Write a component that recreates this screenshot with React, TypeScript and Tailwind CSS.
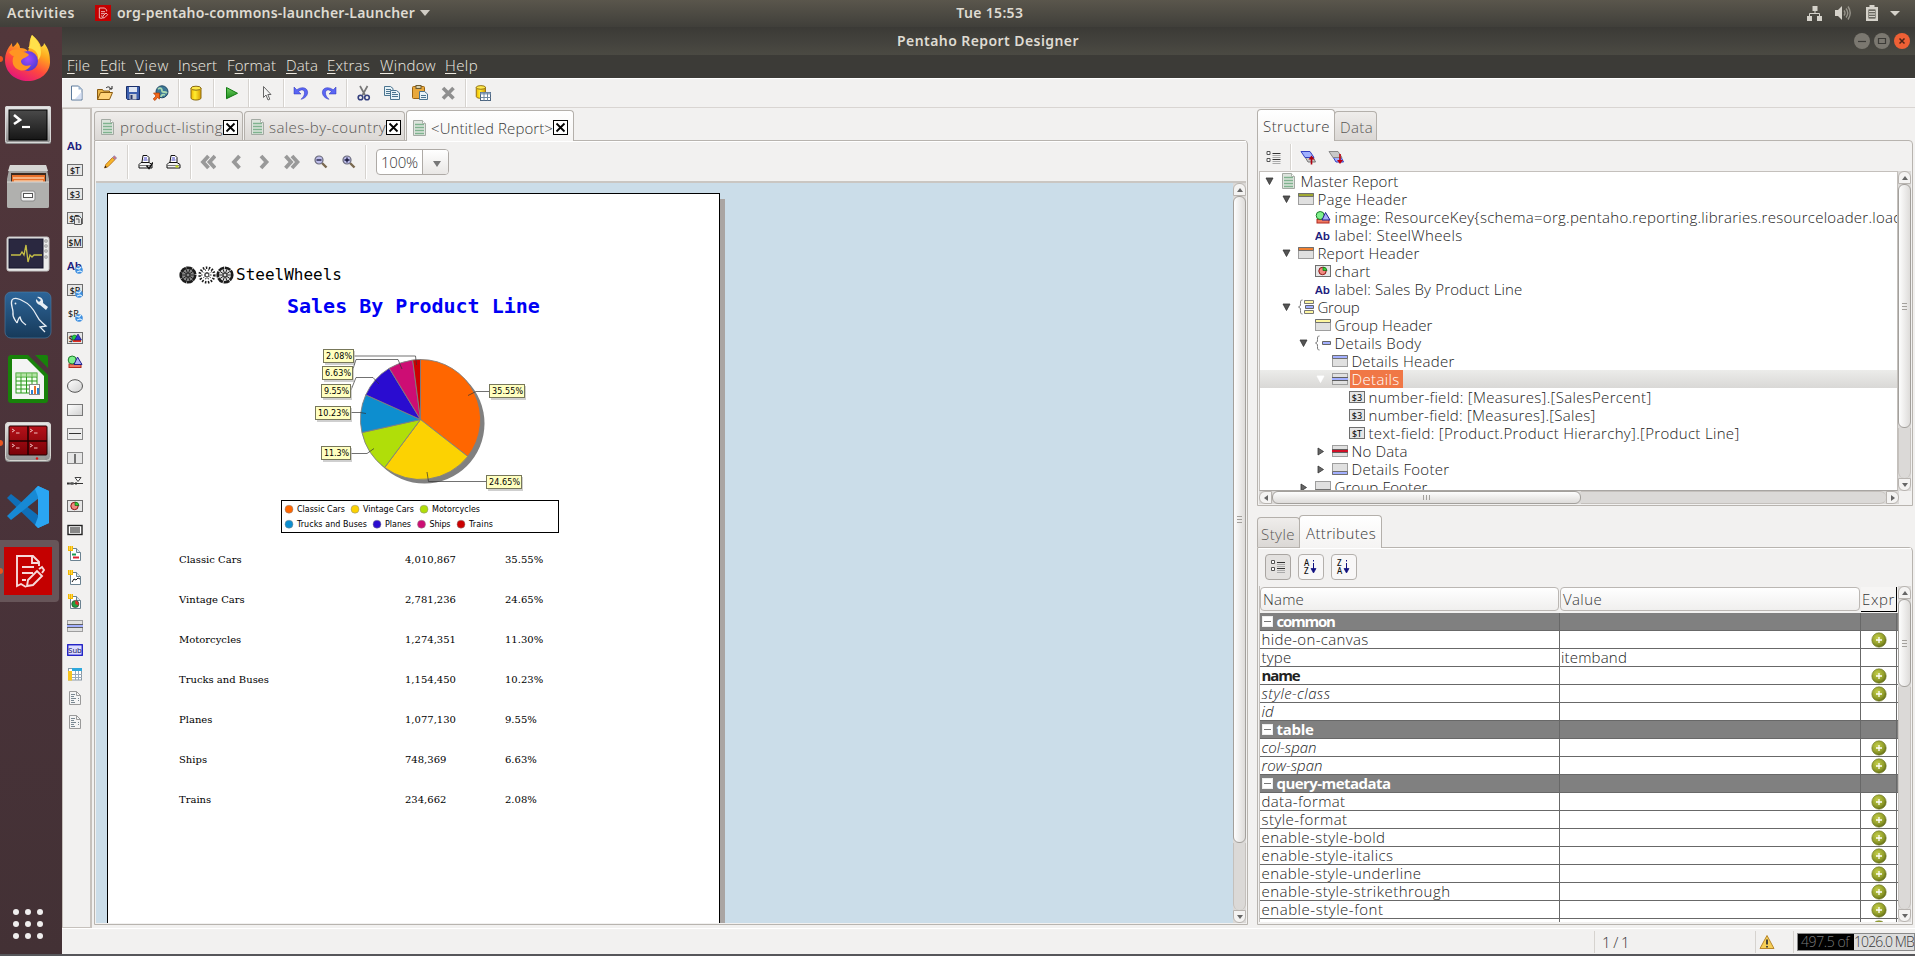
import React, { useLayoutEffect, useRef } from "react";

/* Text run whose letter spacing is tuned so that it fills `w` pixels. */
function Fit({ w, children, className = "" }: { w: number; children: React.ReactNode; className?: string }) {
  const ref = useRef<HTMLSpanElement>(null);
  useLayoutEffect(() => {
    const el = ref.current;
    if (!el) return;
    el.style.letterSpacing = "0px";
    const n = (el.textContent || "").length;
    const natural = el.getBoundingClientRect().width;
    el.style.letterSpacing = `${(w - natural) / n}px`;
  }, [w]);
  return (
    <span ref={ref} className={`inline-block whitespace-pre ${className}`}>
      {children}
    </span>
  );
}

function Ic({ children, s = 16, className = "" }: { children: React.ReactNode; s?: number; className?: string }) {
  return (
    <svg width={s} height={s} viewBox={`0 0 ${s} ${s}`} className={`shrink-0 font-normal ${className}`}>
      {children}
    </svg>
  );
}

const SMALL = "'Noto Sans', 'Open Sans', sans-serif";

function Defs() {
  return (
    <svg width="0" height="0" className="absolute">
      <defs>
        <linearGradient id="ffo" x1="0.8" y1="0" x2="0.3" y2="1">
          <stop offset="0" stopColor="#fff44f" />
          <stop offset="0.35" stopColor="#ffa81e" />
          <stop offset="0.65" stopColor="#ff4a3d" />
          <stop offset="1" stopColor="#e3137d" />
        </linearGradient>
        <radialGradient id="ffp" cx="0.5" cy="0.4" r="0.6">
          <stop offset="0" stopColor="#a04bff" />
          <stop offset="1" stopColor="#4a3bd0" />
        </radialGradient>
        <linearGradient id="yel" x1="0" x2="1">
          <stop offset="0" stopColor="#f0b400" />
          <stop offset="0.4" stopColor="#ffee30" />
          <stop offset="1" stopColor="#d89a00" />
        </linearGradient>
        <linearGradient id="grn" x1="0" y1="0" x2="0" y2="1">
          <stop offset="0" stopColor="#6fd05f" />
          <stop offset="1" stopColor="#1c8a1c" />
        </linearGradient>
        <linearGradient id="sil" x1="0" y1="0" x2="0" y2="1">
          <stop offset="0" stopColor="#e8e8e8" />
          <stop offset="1" stopColor="#8c8c8c" />
        </linearGradient>
        <linearGradient id="blk" x1="0" y1="0" x2="0" y2="1">
          <stop offset="0" stopColor="#4a4a4a" />
          <stop offset="1" stopColor="#161616" />
        </linearGradient>
        <linearGradient id="mys" x1="0" y1="0" x2="0" y2="1">
          <stop offset="0" stopColor="#2d6599" />
          <stop offset="1" stopColor="#173a5a" />
        </linearGradient>
        <linearGradient id="red" x1="0" y1="0" x2="0" y2="1">
          <stop offset="0" stopColor="#b5121a" />
          <stop offset="1" stopColor="#7a0006" />
        </linearGradient>
        <radialGradient id="olv" cx="0.4" cy="0.35" r="0.7">
          <stop offset="0" stopColor="#c5cf4a" />
          <stop offset="0.6" stopColor="#94a02c" />
          <stop offset="1" stopColor="#5f6a14" />
        </radialGradient>
        <linearGradient id="box" x1="0" y1="0" x2="1" y2="1">
          <stop offset="0" stopColor="#fff" />
          <stop offset="1" stopColor="#d0d0d0" />
        </linearGradient>
      </defs>
    </svg>
  );
}

/* ---------- Dock ---------- */
const dock: { run?: boolean; active?: boolean; g: React.ReactNode }[] = [
  {
    run: true,
    g: (
      <g transform="translate(-1 0)">
        <path d="M29 0c5 4 8 8 9 12 2-1 3-2 3-4 5 6 6 12 6 19C47 38 37 46 25 46S2 38 2 25c0-6 2-10 4-13l3-4c0 2 0 3 1 4 2-2 4-3 4-5 2 2 3 4 3 6 4 0 6 1 8 3 2-3 0-8 4-16z" fill="url(#ffo)" />
        <circle cx="25" cy="26" r="10" fill="url(#ffp)" />
        <path d="M6 17c5-4 11-3 14 0 3 0 5 2 6 3-3 3-7 3-8 6 0 4 5 6 10 4-4 8-15 7-18-1-1-4 0-7 1-8-2 0-4-2-5-4z" fill="#ff9522" />
        <path d="M29 0c5 5 9 11 9 17 0 3-1 6-3 8 1-8-5-12-10-12 4-3 1-8 4-13z" fill="#ffe14a" />
      </g>
    ),
  },
  {
    g: (
      <g>
        <rect x="1" y="7" width="46" height="38" rx="2" fill="url(#sil)" />
        <rect x="1.500" y="7.500" width="45" height="36" rx="2" fill="none" stroke="#d8d8d8" />
        <rect x="5" y="11" width="38" height="30" fill="url(#blk)" stroke="#000" />
        <path d="M10 16l6 5-6 4" fill="none" stroke="#fff" strokeWidth="2.600" />
        <path d="M18 28h8" stroke="#fff" strokeWidth="2.200" />
      </g>
    ),
  },
  {
    g: (
      <g>
        <path d="M6 2h36l3 14v27a2 2 0 0 1-2 2H5a2 2 0 0 1-2-2V16z" fill="#a3a3a1" />
        <path d="M6 2h36l2 6H4z" fill="#d5d5d3" />
        <rect x="7" y="10" width="35" height="10" fill="#3d2a20" />
        <rect x="8" y="12" width="33" height="8" fill="#e8702a" />
        <path d="M9 15h31M10 18h29" stroke="#f9c8a0" strokeWidth="1.500" />
        <path d="M3 19h42v24a2 2 0 0 1-2 2H5a2 2 0 0 1-2-2z" fill="#b0b0ae" />
        <path d="M3 19h42" stroke="#d8d8d6" />
        <rect x="17" y="28" width="14" height="10" rx="2" fill="#efefef" stroke="#888" />
        <rect x="19.500" y="30.500" width="9" height="4" fill="#fff" stroke="#555" />
      </g>
    ),
  },
  {
    g: (
      <g>
        <rect x="3" y="10" width="42" height="34" rx="2" fill="#ececec" stroke="#c4c4c4" />
        <rect x="5" y="12" width="34" height="29" fill="#2a2840" stroke="#15142a" />
        <path d="M7 28h9l2-3 2 3 0 0 2-10 2 17 2-7 2 2 2-2h8" fill="none" stroke="#c6bf45" strokeWidth="1.300" />
        {[14, 19, 24, 30].map((y) => (
          <circle key={y} cx="42" cy={y} r="1.600" fill="#bbb" stroke="#999" strokeWidth="0.500" />
        ))}
      </g>
    ),
  },
  {
    g: (
      <g>
        <rect x="1" y="1" width="46" height="46" rx="6" fill="url(#mys)" stroke="#4f7fa8" strokeWidth="0.600" />
        <path d="M13 32c-2-4-5-5-4-11 0-4-3-8-1-12 2-3 8-1 11 1 7 3 11 9 14 15 2 5 5 6 9 10l-6 1 5 5" fill="none" stroke="#e8eef4" strokeWidth="1.300" />
        <path d="M13 32c1-3 2-6 3-6 1 4 2 5 6 8" fill="none" stroke="#e8eef4" strokeWidth="1.300" />
        <circle cx="11.500" cy="12.500" r="0.900" fill="#e8eef4" />
        <path d="M33 6a5 5 0 0 1 6 6l5 4-2 3-6-5a5 5 0 0 1-4-6l3 3 2-2z" fill="#e8eef4" />
      </g>
    ),
  },
  {
    g: (
      <g>
        <path d="M6 0h18l20 20v25a3 3 0 0 1-3 3H7a3 3 0 0 1-3-3V2z" fill="#18820a" />
        <path d="M31 0h11a2 2 0 0 1 2 2v11z" fill="#18820a" />
        <path d="M8 4h15l17 17v23H8z" fill="#f4f4f4" />
        <rect x="12" y="18" width="21" height="20" fill="#f4fff0" stroke="#2a9a1c" />
        <path d="M12 22h21M12 26h21M12 30h21M12 34h21M17 18v20M22.500 18v20M28 18v20" stroke="#2a9a1c" />
        <rect x="12" y="18" width="21" height="4" fill="#8ed07a" opacity="0.600" />
        <rect x="25.500" y="29.500" width="10" height="10" fill="#fff" stroke="#888" />
        <rect x="27" y="35" width="2" height="4" fill="#2a7fd0" />
        <rect x="30" y="31" width="2" height="8" fill="#e8702a" />
        <rect x="33" y="33" width="2" height="6" fill="#2a7fd0" />
      </g>
    ),
  },
  {
    run: true,
    g: (
      <g>
        <rect x="1" y="3" width="46" height="40" rx="4" fill="url(#sil)" />
        <rect x="1.500" y="3.500" width="45" height="38" rx="4" fill="none" stroke="#d5d5d0" />
        <rect x="5" y="7" width="38" height="29" rx="1" fill="url(#red)" stroke="#200" />
        <path d="M24 7v29M5 22h38" stroke="#200" strokeWidth="1.500" />
        {[
          [8, 10],
          [26, 10],
          [8, 25],
          [26, 25],
        ].map(([x, y]) => (
          <path key={`${x}-${y}`} d={`M${x} ${y}l2.500 1.500-2.500 1.500M${x + 4} ${y + 4}h3.500`} fill="none" stroke="#f0c0c0" strokeWidth="1" />
        ))}
        <circle cx="33" cy="39.500" r="1.200" fill="#e01010" />
        <rect x="36" y="38" width="5" height="3" rx="1" fill="#9a9a94" />
      </g>
    ),
  },
  {
    g: (
      <g>
        <path d="M3 15l4-4 28 22v12L34 45z" fill="#0f6fb8" />
        <path d="M3 33l4 4L35 15V3L34 3z" fill="#1789d4" />
        <path d="M34 3l11 5v32l-11 5z" fill="#2aa5f2" />
        <path d="M34 3L31 6l3 8v20l-3 8 3 3 11-5V8z" fill="#2aa5f2" />
      </g>
    ),
  },
  {
    run: true,
    active: true,
    g: (
      <g>
        <rect width="48" height="48" fill="#c40000" />
        <g fill="none" stroke="#f6dada" strokeWidth="1.900">
          <path d="M35 19v-4l-6-6H13v30l4-2 5 3" />
          <path d="M28 9v7h7M18 20h12M18 26h11M18 33h4" />
          <path d="M23 39l1-6 9-9 5 5-9 9zM35 22l3-2 2 3-2 3" />
        </g>
      </g>
    ),
  },
];

function Dock() {
  return (
    <div className="flex w-[62px] shrink-0 flex-col bg-gradient-to-b from-[#52373b] via-[#4a333a] to-[#433135]">
      {dock.map((d, i) => (
        <div key={i} className="flex h-16 items-center">
          <div className={`flex h-[62px] w-[59px] items-center rounded-r ${d.active ? "bg-[#675559]" : ""}`}>
            <span className={`h-[6px] w-[3px] rounded-r-full ${d.run ? "bg-[#e95420]" : ""}`} />
            <svg width="48" height="48" viewBox="0 0 48 48" className="ml-px">
              {d.g}
            </svg>
          </div>
        </div>
      ))}
      <div className="mt-auto mb-[15px] ml-[13px] grid w-[30px] grid-cols-3 gap-[6px]">
        {Array.from({ length: 9 }, (_, i) => (
          <span key={i} className="size-[6px] rounded-full bg-[#f0eeee]" />
        ))}
      </div>
    </div>
  );
}

/* ---------- Small icons ---------- */
const FieldBox = ({ t }: { t?: string }) => (
  <g>
    <rect x="0.500" y="2.500" width="15" height="11" fill="#e6e6e6" stroke="#6e6e6e" />
    {t && (
      <text x="8" y="11.500" fontSize="9" textAnchor="middle" fill="#000" style={{ fontFamily: SMALL }}>
        {t}
      </text>
    )}
  </g>
);
const AbText = ({ y = 13 }: { y?: number }) => (
  <text x="0" y={y} fontSize="11.500" fontWeight="600" fill="#1c1c7c" textLength="15" lengthAdjust="spacingAndGlyphs" style={{ fontFamily: SMALL }}>
    Ab
  </text>
);
const Globe = () => (
  <g>
    <circle cx="12" cy="12" r="3.800" fill="#3f8fe0" />
    <path d="M9 10l3 1 2-2M10 14l3-1 2 1" stroke="#d8f0ff" strokeWidth="1.200" fill="none" />
  </g>
);
const Shapes = () => (
  <g>
    <rect x="2" y="10.500" width="12" height="3.500" fill="#f07860" stroke="#b02a20" />
    <circle cx="5.200" cy="6.500" r="4" fill="#7ff08c" stroke="#1b7a2a" />
    <path d="M10.500 3.500l4.500 7.500H7z" fill="#a9aef8" stroke="#20208a" />
  </g>
);
const MiniPie = () => (
  <g>
    <FieldBox />
    <circle cx="7.500" cy="8" r="3.700" fill="#f08a80" stroke="#8a1010" />
    <path d="M8 7.500V4a4 4 0 0 1 4 3.500z" fill="#38d038" stroke="#106010" strokeWidth="0.700" />
  </g>
);
const NewDoc = ({ children }: { children: React.ReactNode }) => (
  <g>
    <path d="M3.500 2.500h6l4 4v8h-10z" fill="#fff" stroke="#6b8291" />
    <path d="M9.500 2.500v4h4" fill="#dbe6ee" stroke="#6b8291" />
    <path d="M1 0h5v5H1z" fill="#f5b800" />
    <path d="M2 1h1M4 3h1M4 1h1M2 3h1" stroke="#fff3b0" />
    {children}
  </g>
);
const GreyDoc = () => (
  <g>
    <path d="M2.500 1.500h7l4 4v9h-11z" fill="#f4f4f4" stroke="#9a9a9a" />
    <path d="M9.500 1.500v4h4" fill="none" stroke="#9a9a9a" />
    <path d="M4 4.500h4M4 6.500h3M4 8.500h5M4 10.500h3M4 12.500h4M11 8.500h1M11 10.500h1" stroke="#6b7a86" strokeWidth="0.900" />
  </g>
);
const Band = ({ c, at = "top" }: { c: string; at?: "top" | "mid" | "bottom" | "none" }) => (
  <g>
    <rect x="0.500" y="2.500" width="15" height="11" fill="#e0e0e0" stroke="#9e9e9e" />
    {at === "top" && <path d="M.5 2.500h15v3H.5z" fill={c} stroke="#707070" />}
    {at === "mid" && <path d="M-.5 6.500h17v3h-17z" fill={c} stroke="#606060" />}
    {at === "bottom" && <path d="M.5 10.500h15v3H.5z" fill={c} stroke="#707070" />}
  </g>
);
const ReportDoc = () => (
  <g>
    <path d="M1.500.5h9l3 3v12h-12z" fill="#dde4dd" stroke="#a3aaa3" />
    <path d="M3 4.500h9M3 7.500h9M3 10.500h9M3 13.500h9" stroke="#7fb38f" strokeWidth="1.700" />
    <path d="M10.500.5v3h3" fill="#fff" stroke="#aab2aa" />
  </g>
);
const ListIcon = () => (
  <g>
    <path d="M1.500 1.500h3v3h-3zM1.500 8.500h3v3h-3z" fill="#fff" stroke="#555" />
    <path d="M7 3.500h8M7 9.500h8" stroke="#333" />
    <path d="M7 5.500h8M7 7.500h8M7 11.500h8M7 13.500h8" stroke="#aaa" />
  </g>
);

const palette: React.ReactNode[] = [
  <AbText y={12} />,
  <FieldBox t="$T" />,
  <FieldBox t="$3" />,
  <g>
    <FieldBox t="$D" />
    <path d="M7.500 6.500h5l2 2v6h-7z" fill="#e8e8e8" stroke="#555" />
    <path d="M9 9h3v4" stroke="#555" fill="none" />
  </g>,
  <FieldBox t="$M" />,
  <g><AbText y={12} /><Globe /></g>,
  <g><FieldBox t="$R" /><Globe /></g>,
  <g>
    <text x="1" y="11" fontSize="9" fill="#111" style={{ fontFamily: SMALL }}>$R</text>
    <Globe />
  </g>,
  <g>
    <FieldBox />
    <text x="1.500" y="11.500" fontSize="9" fill="#111" style={{ fontFamily: SMALL }}>$</text>
    <rect x="6" y="9.500" width="8" height="2.500" fill="#e03020" />
    <circle cx="7.500" cy="7.500" r="2.500" fill="#20d040" stroke="#106020" strokeWidth="0.600" />
    <path d="M11 4l3.500 6h-7z" fill="#3038d0" stroke="#101060" strokeWidth="0.600" />
  </g>,
  <g transform="translate(0 -.5)"><Shapes /></g>,
  <ellipse cx="8" cy="8" rx="7.500" ry="6.300" fill="url(#box)" stroke="#555" />,
  <rect x="0.500" y="2.500" width="15" height="11" fill="url(#box)" stroke="#777" />,
  <g><rect x="0.500" y="2.500" width="15" height="11" fill="#ededed" stroke="#888" /><path d="M2 7.500h12" stroke="#333" /></g>,
  <g><rect x="0.500" y="2.500" width="15" height="11" fill="#e6e6e6" stroke="#888" /><path d="M8 4v9" stroke="#555" strokeWidth="1.600" /></g>,
  <g><path d="M0 9.500h16M1 8v3M5 8v3M9 8v3" stroke="#333" /><path d="M8 3.500h6l-3 4z" fill="#fff" stroke="#444" /><path d="M2 8.500h5v2H2z" fill="#555" /></g>,
  <MiniPie />,
  <g><rect x="1" y="3.500" width="14" height="9" fill="#fff" stroke="#222" strokeWidth="1.400" /><path d="M4 5v6M6 5v6M8 5v6M10 5v6M12 5v6" stroke="#111" strokeWidth="1" /></g>,
  <NewDoc><path d="M5 8.500h4" stroke="#1a9a50" strokeWidth="2" /><path d="M6 11.500h6" stroke="#e02030" strokeWidth="2" /></NewDoc>,
  <NewDoc><path d="M5 12l2-3 2 1 2-2 2 1" fill="none" stroke="#111" /></NewDoc>,
  <NewDoc><circle cx="8.300" cy="10" r="3.600" fill="#20a040" stroke="#222" strokeWidth="0.600" /><path d="M8.300 10V6.500a3.600 3.600 0 0 1 3 5z" fill="#e02828" /></NewDoc>,
  <Band c="#a3b0ff" at="mid" />,
  <g>
    <rect x="0.750" y="2.750" width="14.500" height="10.500" fill="#dcdcff" stroke="#1010c0" strokeWidth="1.300" />
    <text x="8" y="11" fontSize="7.500" textAnchor="middle" fill="#16165a" style={{ fontFamily: SMALL }}>Sub</text>
  </g>,
  <g>
    <rect x="1.500" y="2.500" width="13" height="11.500" fill="#fff" stroke="#8a9aa5" />
    <rect x="5" y="2" width="10" height="3" fill="#2fa8dc" />
    <rect x="1" y="5" width="4" height="9.500" fill="#f7c520" />
    <path d="M5 8.500h10M5 11.500h10M8.500 5v9M11.500 5v9" stroke="#9ab" />
  </g>,
  <GreyDoc />,
  <GreyDoc />,
];

const Sep = () => (
  <div className="flex h-full w-[7px] shrink-0 justify-center">
    <span className="w-px bg-[#d6d3cf]" />
    <span className="w-px bg-white" />
  </div>
);
const Cell = ({ children }: { children: React.ReactNode }) => (
  <div className="flex w-7 shrink-0 items-center justify-center">
    <Ic>{children}</Ic>
  </div>
);

const Db = () => (
  <g>
    <path d="M3 3v10c0 2.700 10 2.700 10 0V3z" fill="url(#yel)" stroke="#8a6a10" />
    <ellipse cx="8" cy="3.200" rx="5" ry="2" fill="#ffe94a" stroke="#8a6a10" />
  </g>
);

const tools: (React.ReactNode | "sep")[] = [
  <g transform="translate(1 0)"><path d="M1.500 1h7l3.500 3.500V15h-10.500z" fill="#fff" stroke="#5c7a9c" /><path d="M8.500 1v3.500H12z" fill="#9ab4d0" /><path d="M5 14h6.500V7z" fill="#d6e0f4" /></g>,
  <g><path d="M.5 14.500v-10h5l1 1.500h6v3" fill="#e8b448" stroke="#8a5a10" /><path d="M.5 14.500l3-7h12l-3 7z" fill="#ffd37a" stroke="#8a5a10" /><path d="M9 3c2-2 4-1 5 1M15 1v3h-3" fill="none" stroke="#222" /></g>,
  <g><path d="M1.500 1.500h13v13h-12l-1-1z" fill="#3c5fae" stroke="#1a2f6a" /><rect x="4" y="2" width="8" height="5" fill="#dfe6f2" /><rect x="4.500" y="9" width="7" height="5.500" fill="#c7ccd6" /><rect x="5.500" y="10" width="2" height="4" fill="#26376a" /></g>,
  <g><circle cx="9" cy="6.800" r="6" fill="#3c7796" stroke="#204a66" /><path d="M5 4c3-2 4 0 4 2s3 0 5 2M8 12c0-2 2-3 4-2" fill="none" stroke="#a8d8b0" strokeWidth="1.800" /><path d="M.5 8h6v6l-2-1.500L2 15.500.2 14 3 11z" fill="#f56a1c" stroke="#b03a00" strokeWidth="0.700" /></g>,
  "sep",
  <Db />,
  "sep",
  <path d="M3.500 2.500l11 5.800-11 5.400z" fill="url(#grn)" stroke="#127a12" />,
  "sep",
  <path d="M5.500 1.500v11l2.500-2.500 2 5 1.800-.8-2-4.700h3.200z" fill="#f4f4f4" stroke="#666" />,
  "sep",
  <path d="M1 2v7h7l-2.500-2.500C8 4.500 11 4 11.500 7.500c.3 2.500-1.500 5-3.500 6.800 4-.8 7-4 6.600-7.500C14 2 8 1.500 3.800 4.800z" fill="#5a66f4" stroke="#2a30b8" strokeWidth="0.500" />,
  <path d="M15 2v7H8l2.500-2.500C8 4.500 5 4 4.500 7.500c-.3 2.500 1.500 5 3.500 6.800-4-.8-7-4-6.600-7.500C2 2 8 1.500 12.200 4.800z" fill="#5a66f4" stroke="#2a30b8" strokeWidth="0.500" />,
  "sep",
  <g fill="none"><path d="M4 1l5 9M11.500 1L6.500 10" stroke="#777" strokeWidth="1.700" /><circle cx="4.500" cy="12.500" r="2.300" stroke="#34407e" strokeWidth="1.600" /><circle cx="11" cy="12.500" r="2.300" stroke="#34407e" strokeWidth="1.600" /></g>,
  <g stroke="#4c7590"><path d="M.5 1.500h6l2.500 2v7H.5z" fill="#e8f3f8" /><path d="M2 4.500h5M2 6.500h5M2 8.500h5" /><path d="M6.500 5.500h6l3 2.500v6.500h-9z" fill="#e8f3f8" /><path d="M8 9.500h6M8 11.500h6M8 7.500h4" /></g>,
  <g><rect x="0.500" y="1.500" width="12" height="12" rx="1" fill="#e8a83c" stroke="#9a6414" /><rect x="4" y="0.500" width="5" height="3" fill="#d8d0b0" stroke="#6a5a30" /><path d="M7.500 6.500h5l3 2.500v5.500h-8z" fill="#e8f3f8" stroke="#4c7590" /><path d="M9 10.500h5M9 12.500h5" stroke="#4c7590" /></g>,
  <path d="M3 3l10.500 10.500M13.500 3L3 13.500" stroke="#8f8f8f" strokeWidth="3.600" />,
  "sep",
  <g><g transform="translate(-1.500 -.5) scale(.92)"><Db /></g><rect x="5.500" y="7.500" width="10" height="8" fill="#fff" stroke="#4c6580" /><rect x="5.500" y="7.500" width="10" height="2" fill="#8fa6c0" /><path d="M5.500 12.500h10M9 8v7.500M12.500 8v7.500" stroke="#7088a0" /></g>,
];

const Chev = ({ d }: { d: string }) => <path d={d} fill="none" stroke="#999" strokeWidth="3.800" />;
const Printer = () => (
  <g>
    <path d="M4.500 8l1-6.500h4l2 2V8" fill="#fff" stroke="#111" />
    <path d="M6.500 4h3M6 6h4" stroke="#8080d8" strokeWidth="1.400" />
    <path d="M3.500 8.500h8l3 2v3.500h-13v-3.500z" fill="#f4f4f4" stroke="#111" />
    <path d="M2 11.500h12" stroke="#555" strokeWidth="0.800" />
  </g>
);
const Lens = ({ plus }: { plus?: boolean }) => (
  <g transform="translate(1 0)">
    <path d="M9 9l4.500 4.500" stroke="#7a6a50" strokeWidth="2.400" />
    <circle cx="6" cy="6" r="4" fill="#bcbce8" stroke="#6a6a7a" strokeWidth="1.200" />
    <path d={plus ? "M3.500 6h5M6 3.500v5" : "M3.500 6h5"} stroke="#15153a" strokeWidth="1.300" />
  </g>
);
const previewTools: (React.ReactNode | "sep")[] = [
  <g><path d="M2.500 14l1.300-3.500L10.500 3.500l2.300 2.300L6 12.700z" fill="#f7b52a" stroke="#b56a10" strokeWidth="0.800" /><path d="M10.800 3.200l1.500-1.500 2.300 2.300-1.500 1.500z" fill="#d87070" stroke="#7a80c0" strokeWidth="0.700" /><path d="M2.500 14l.8-2.300 1.500 1.500z" fill="#111" /></g>,
  "sep",
  <g transform="translate(.5 0)"><Printer /><path d="M9 11.500l2.500 3 4-6" fill="none" stroke="#111" strokeWidth="1.500" /></g>,
  <g transform="translate(.5 0)"><Printer /><path d="M10 12.500h3" stroke="#c8e020" strokeWidth="2" /></g>,
  "sep",
  <Chev d="M8.500 2L3 8l5.500 6M15 2L9.500 8l5.500 6" />,
  <Chev d="M11.500 2L6 8l5.500 6" />,
  <Chev d="M5 2l5.500 6L5 14" />,
  <Chev d="M1.500 2L7 8l-5.500 6M8 2l5.500 6L8 14" />,
  <Lens />,
  <Lens plus />,
  "sep",
];

/* ---------- Scroll bars ---------- */
const VBtn = ({ up }: { up?: boolean }) => (
  <div className={`flex h-[13px] shrink-0 items-center justify-center border border-[#b8b4b0] bg-[#f4f3f2] ${up ? "rounded-t-md" : "rounded-b-md"}`}>
    <svg width="6" height="4" viewBox="0 0 6 4">
      <path d={up ? "M0 4l3-4 3 4z" : "M0 0l3 4 3-4z"} fill="#666" />
    </svg>
  </div>
);
const VBar = ({ thumb }: { thumb: string }) => (
  <div className="flex w-[13px] shrink-0 flex-col bg-[#dbd9d7]">
    <VBtn up />
    <div className={`flex w-full shrink-0 flex-col items-center justify-center gap-[2px] rounded-[6px] border border-[#a3a09c] bg-gradient-to-r from-[#fdfdfd] to-[#dedcda] ${thumb}`}>
      <span className="h-px w-[5px] bg-[#a3a09c]" />
      <span className="h-px w-[5px] bg-[#a3a09c]" />
      <span className="h-px w-[5px] bg-[#a3a09c]" />
    </div>
    <div className="flex-1 rounded-b-md border-x border-[#c4c0bc]" />
    <VBtn />
  </div>
);

/* ---------- Tabs ---------- */
function Tab({ active, className = "", children }: { active?: boolean; className?: string; children: React.ReactNode }) {
  return (
    <div
      className={`relative flex shrink-0 items-center rounded-t-[4px] border border-b-0 border-[#b4b0ab] ${
        active ? "z-10 -mb-px bg-gradient-to-b from-white to-[#f5f4f3] text-[#383838]" : "bg-gradient-to-b from-[#efedeb] to-[#dbd8d5] text-[#5a5856]"
      } ${className}`}
    >
      {children}
    </div>
  );
}
const CloseBox = () => (
  <svg width="15" height="15" viewBox="0 0 15 15" className="shrink-0">
    <rect x="0.500" y="0.500" width="14" height="14" fill="#fff" stroke="#000" />
    <path d="M3.500 3.500l8 8M11.500 3.500l-8 8" stroke="#000" strokeWidth="1.800" />
  </svg>
);

/* ---------- Report page ---------- */
const slices: [number, string][] = [
  [35.55, "#ff6600"],
  [24.65, "#fcd202"],
  [11.3, "#b0de09"],
  [10.23, "#0d8ecf"],
  [9.55, "#2a0cd0"],
  [6.63, "#cd0d74"],
  [2.08, "#cc0000"],
];
function piePaths(cx: number, cy: number, r: number) {
  const total = slices.reduce((s, [v]) => s + v, 0);
  let a = -Math.PI / 2;
  return slices.map(([v, c]) => {
    const b = a + (v / total) * Math.PI * 2;
    const d = `M${cx} ${cy}L${cx + r * Math.cos(a)} ${cy + r * Math.sin(a)}A${r} ${r} 0 0 1 ${cx + r * Math.cos(b)} ${cy + r * Math.sin(b)}Z`;
    a = b;
    return { d, c };
  });
}
/* box x, y, width, text, leader line; all relative to the chart origin */
const callouts: [number, number, number, string, string][] = [
  [43, 4, 30, "2.08%", "M73 11H135.500L136.500 20"],
  [42, 21, 30, "6.63%", "M72 27L76 14.500H118L122 24"],
  [41, 39, 29, "9.55%", "M71 45L76 32.500H93L99 39"],
  [35, 61, 35, "10.23%", "M70 67.500H80L86 68.500"],
  [41, 101, 29, "11.3%", "M70 108.500H87L94 103.500"],
  [209, 39, 35, "35.55%", "M209 46.500H196L188 50.500"],
  [206, 130, 35, "24.65%", "M206 136.500H148.500L147 127"],
];
const legend: [number, number, number, string, string][] = [
  [9, 9, 48, "Classic Cars", "#ff6600"],
  [75, 9, 51, "Vintage Cars", "#fcd202"],
  [144, 9, 48, "Motorcycles", "#b0de09"],
  [9, 24, 70, "Trucks and Buses", "#0d8ecf"],
  [97, 24, 26, "Planes", "#2a0cd0"],
  [141.5, 24, 21, "Ships", "#cd0d74"],
  [181, 24, 24, "Trains", "#cc0000"],
];
const DJ = { fontFamily: "'DejaVu Sans', sans-serif" };

function Chart() {
  return (
    <svg width="280" height="190" viewBox="0 0 280 190" className="ml-[172px] font-normal">
      <circle cx="144.500" cy="78.500" r="60" fill="#808080" />
      {piePaths(140.5, 74.5, 60).map((p) => (
        <path key={p.c} d={p.d} fill={p.c} stroke="#808080" strokeWidth="0.900" />
      ))}
      {callouts.map(([x, y, w, t, l]) => (
        <g key={t}>
          <path d={l} fill="none" stroke="#333" strokeWidth="0.700" />
          <rect x={x + 2} y={y + 2} width={w} height="14" fill="#bbb" opacity="0.700" />
          <rect x={x + 0.5} y={y + 0.5} width={w} height="13" fill="#ffffc0" stroke="#77775a" />
          <text x={x + 3} y={y + 10} fontSize="8" fill="#000" textLength={w - 4} style={DJ}>
            {t}
          </text>
        </g>
      ))}
      <rect x="1.500" y="155.500" width="277" height="32" fill="#fff" stroke="#000" />
      {legend.map(([x, y, w, t, c]) => (
        <g key={t}>
          <circle cx={x} cy={y + 155.2} r="4" fill={c} stroke="#888" strokeWidth="0.500" />
          <text x={x + 8} y={y + 158} fontSize="8" fill="#000" textLength={w} style={DJ}>
            {t}
          </text>
        </g>
      ))}
    </svg>
  );
}

const wheel = (cx: number, dash: string, fill: string) => (
  <g>
    <circle cx={cx} cy="9" r="7.300" fill={fill} stroke="#1c1c1c" strokeWidth="2.600" strokeDasharray={dash} />
    {[0, 36, 72, 108, 144].map((a) => (
      <path key={a} d={`M${cx - 6} 9H${cx + 6}`} transform={`rotate(${a} ${cx} 9)`} stroke="#222" strokeWidth="0.900" strokeDasharray={dash} />
    ))}
    <circle cx={cx} cy="9" r="2" fill={fill} stroke="#222" />
  </g>
);

const sales = [
  ["Classic Cars", "4,010,867", "35.55%"],
  ["Vintage Cars", "2,781,236", "24.65%"],
  ["Motorcycles", "1,274,351", "11.30%"],
  ["Trucks and Buses", "1,154,450", "10.23%"],
  ["Planes", "1,077,130", "9.55%"],
  ["Ships", "748,369", "6.63%"],
  ["Trains", "234,662", "2.08%"],
];

function Page() {
  return (
    <div className="flex min-h-0 flex-1 bg-[#cbdde9] pt-[10px] pl-[11px] font-normal">
      <div className="flex w-[613px] flex-col border border-b-0 border-black bg-white">
        <div className="mt-[71px] flex h-[20px] items-center pl-[71px]">
          <svg width="56" height="18" viewBox="0 0 56 18">
            {wheel(9, "6 0.500", "#888")}
            {wheel(28, "1.500 1.500", "#fff")}
            {wheel(46, "6 0.800", "#ddd")}
          </svg>
          <span className="ml-px font-['DejaVu_Sans_Mono',monospace] text-[16px] leading-[20px] text-black">SteelWheels</span>
        </div>
        <div className="mt-[8px] h-[26px] pl-[179px] font-['DejaVu_Sans_Mono',monospace] text-[20px] leading-[26px] font-bold text-[#0000f4]">
          Sales By Product Line
        </div>
        <div className="mt-[26px] h-[190px]">
          <Chart />
        </div>
        <div className="mt-[5px] font-['DejaVu_Serif',serif] text-[10px] text-black">
          {sales.map((r) => (
            <div key={r[0]} className="flex h-10 items-center pl-[71px]">
              <span className="w-[226px]">{r[0]}</span>
              <span className="w-[100px]">{r[1]}</span>
              <span>{r[2]}</span>
            </div>
          ))}
        </div>
      </div>
      <div className="mt-[6px] w-[5px] bg-[#aaa5a3]" />
    </div>
  );
}

/* ---------- Structure tree ---------- */
const GroupIc = () => (
  <g>
    <path d="M4.500 1c-2 0-2 1-2 3.500S2 7.500.5 8c1.500.5 2 1 2 3.500s0 3.500 2 3.500" fill="none" stroke="#777" />
    <path d="M6.500 1.500h9v3h-9zM6.500 11.500h9v3h-9z" fill="#fdf6a0" stroke="#777" />
    <path d="M7.500 6.500h8v3h-8z" fill="#a3b0ff" stroke="#666" />
  </g>
);
const BodyIc = () => (
  <g>
    <path d="M4.500 1c-2 0-2 1-2 3.500S2 7.500.5 8c1.500.5 2 1 2 3.500s0 3.500 2 3.500" fill="none" stroke="#777" />
    <path d="M7.500 6.500h8v3h-8z" fill="#a3b0ff" stroke="#666" />
  </g>
);
type Node = { l: number; a?: "open" | "shut"; i: React.ReactNode; t: string; w: number; sel?: boolean };
const tree: Node[] = [
  { l: 0, a: "open", i: <ReportDoc />, t: "Master Report", w: 98 },
  { l: 1, a: "open", i: <Band c="#a0a832" />, t: "Page Header", w: 90 },
  { l: 2, i: <Shapes />, t: "image: ResourceKey{schema=org.pentaho.reporting.libraries.resourceloader.load", w: 568 },
  { l: 2, i: <AbText />, t: "label: SteelWheels", w: 128 },
  { l: 1, a: "open", i: <Band c="#f08030" />, t: "Report Header", w: 102 },
  { l: 2, i: <MiniPie />, t: "chart", w: 36 },
  { l: 2, i: <AbText />, t: "label: Sales By Product Line", w: 188 },
  { l: 1, a: "open", i: <GroupIc />, t: "Group", w: 42 },
  { l: 2, i: <Band c="#fdf6a0" />, t: "Group Header", w: 98 },
  { l: 2, a: "open", i: <BodyIc />, t: "Details Body", w: 87 },
  { l: 3, i: <Band c="#a3b0ff" />, t: "Details Header", w: 103 },
  { l: 3, a: "open", i: <Band c="#a3b0ff" at="mid" />, t: "Details", w: 48, sel: true },
  { l: 4, i: <FieldBox t="$3" />, t: "number-field: [Measures].[SalesPercent]", w: 283 },
  { l: 4, i: <FieldBox t="$3" />, t: "number-field: [Measures].[Sales]", w: 227 },
  { l: 4, i: <FieldBox t="$T" />, t: "text-field: [Product.Product Hierarchy].[Product Line]", w: 371 },
  { l: 3, a: "shut", i: <Band c="#d01028" at="mid" />, t: "No Data", w: 56 },
  { l: 3, a: "shut", i: <Band c="#a3b0ff" at="bottom" />, t: "Details Footer", w: 98 },
  { l: 2, a: "shut", i: <Band c="#fdf6a0" at="bottom" />, t: "Group Footer", w: 93 },
];
const indent = ["pl-[5px]", "pl-[22px]", "pl-[39px]", "pl-[56px]", "pl-[73px]"];

function Tree() {
  return (
    <div className="h-[320px] min-w-0 flex-1 overflow-hidden border border-b-[#a8a5a2] border-[#c4c0bc] bg-white">
      {tree.map((n, k) => (
        <div
          key={k}
          className={`flex h-[18px] items-center ${indent[n.l]} ${n.sel ? "bg-gradient-to-b from-[#ececea] to-[#d9d8d6]" : ""}`}
        >
          <svg width="9" height="9" viewBox="0 0 9 9" className="mr-[7px] shrink-0">
            {n.a === "open" && <path d="M1 1h7L4.500 7.500z" fill={n.sel ? "#fff" : "#555"} stroke={n.sel ? "#fff" : "#333"} strokeWidth="0.800" />}
            {n.a === "shut" && <path d="M2 1v7l5.500-3.500z" fill="#666" stroke="#333" strokeWidth="0.800" />}
          </svg>
          <Ic>{n.i}</Ic>
          <span className={`ml-[2px] h-[18px] px-[1.500px] leading-[18px] ${n.sel ? "bg-[#f07746] pr-[3px] text-white" : "text-[#222]"}`}>
            <Fit w={n.w}>{n.t}</Fit>
          </span>
        </div>
      ))}
    </div>
  );
}

/* ---------- Attributes ---------- */
type Row = { t: string; w: number; k?: "cat" | "b" | "i"; v?: string; e?: boolean };
const rows: Row[] = [
  { t: "common", w: 58, k: "cat" },
  { t: "hide-on-canvas", w: 107, e: true },
  { t: "type", w: 30, v: "itemband" },
  { t: "name", w: 38, k: "b", e: true },
  { t: "style-class", w: 69, k: "i", e: true },
  { t: "id", w: 12, k: "i" },
  { t: "table", w: 37, k: "cat" },
  { t: "col-span", w: 55, k: "i", e: true },
  { t: "row-span", w: 61, k: "i", e: true },
  { t: "query-metadata", w: 114, k: "cat" },
  { t: "data-format", w: 84, e: true },
  { t: "style-format", w: 86, e: true },
  { t: "enable-style-bold", w: 124, e: true },
  { t: "enable-style-italics", w: 132, e: true },
  { t: "enable-style-underline", w: 160, e: true },
  { t: "enable-style-strikethrough", w: 189, e: true },
  { t: "enable-style-font", w: 122, e: true },
  { t: "enable-style-format", w: 140, e: true },
];

function Attributes() {
  return (
    <div className="flex h-[336px]">
      <div className="flex min-w-0 flex-1 flex-col overflow-hidden border-l border-[#c4c0bc] bg-white">
        <div className="flex h-[27px] shrink-0 items-start gap-[1px] bg-[#f2f1f0] pt-px text-[#383838]">
          <div className="flex h-[24px] w-[299px] items-center rounded-[4px] border border-[#bbb7b3] bg-gradient-to-b from-white to-[#f0efee] pl-[2px]">
            <Fit w={41}>Name</Fit>
          </div>
          <div className="flex h-[24px] w-[300px] items-center rounded-[4px] border border-[#bbb7b3] bg-gradient-to-b from-white to-[#f0efee] pl-[2px]">
            <Fit w={39}>Value</Fit>
          </div>
          <div className="flex h-[25px] w-[36px] items-center overflow-hidden border-r border-b border-black bg-[#f6f5f4] pl-px">
            <Fit w={33}>Expr</Fit>
          </div>
        </div>
        {rows.map((r) => {
          const cat = r.k === "cat";
          return (
            <div key={r.t} className={`flex h-[18px] shrink-0 border-b border-[#686868] ${cat ? "bg-[#808080] text-white" : "bg-white text-[#222]"}`}>
              <div className="flex w-[300px] items-center border-r border-[#686868] pl-[1.500px] leading-[17px]">
                {cat && (
                  <svg width="11" height="11" viewBox="0 0 11 11" className="mr-[4px]">
                    <rect x="0.500" y="0.500" width="10" height="10" fill="#fff" stroke="#eee" />
                    <path d="M2 5.500h7" stroke="#777" />
                  </svg>
                )}
                <Fit w={r.w} className={cat || r.k === "b" ? "font-bold" : r.k === "i" ? "italic" : ""}>
                  {r.t}
                </Fit>
              </div>
              <div className="flex w-[301px] items-center border-r border-[#686868] pl-px leading-[17px]">{r.v && <Fit w={66}>{r.v}</Fit>}</div>
              <div className="flex w-[36px] items-center justify-center border-r border-[#686868]">
                {r.e && (
                  <Ic>
                    <circle cx="8" cy="8" r="7.200" fill="url(#olv)" stroke="#69741c" strokeWidth="0.600" />
                    <path d="M5 8h6M8 5v6" stroke="#fff" strokeWidth="1.300" />
                  </Ic>
                )}
              </div>
            </div>
          );
        })}
      </div>
      <VBar thumb="h-[88px]" />
    </div>
  );
}

const SortIc = ({ a, b }: { a: string; b: string }) => (
  <g>
    <text x="1" y="7" fontSize="8" fontWeight="500" fill="#111" style={{ fontFamily: SMALL }}>{a}</text>
    <text x="1" y="15" fontSize="8" fontWeight="500" fill="#111" style={{ fontFamily: SMALL }}>{b}</text>
    <path d="M10.500 1v1.500M10.500 4v6" stroke="#101080" />
    <path d="M8 9.500h5l-2.500 4.500z" fill="#101080" stroke="#101080" strokeWidth="0.700" />
  </g>
);

const menu: [string, number, number, number][] = [
  ["File", 0, 23, 33],
  ["Edit", 0, 26, 35],
  ["View", 0, 34, 43],
  ["Insert", 0, 39, 49],
  ["Format", 1, 49, 59],
  ["Data", 0, 32, 41],
  ["Extras", 0, 43, 53],
  ["Window", 0, 56, 65],
  ["Help", 0, 33, 40],
];

export default function App() {
  return (
    <div className="flex h-[956px] w-[1915px] flex-col overflow-hidden bg-[#f2f1f0] font-['Open_Sans','Noto_Sans',sans-serif] text-[15px] leading-[18px] font-light">
      <Defs />
      {/* Desktop bar */}
      <div className="grid h-[27px] shrink-0 grid-cols-3 items-center bg-gradient-to-b from-[#5a564c] to-[#403f3a] pb-px font-['Noto_Sans',sans-serif] text-[14px] font-semibold text-[#dfdbd2]">
        <div className="flex items-center pl-[7px]">
          <Fit w={68}>Activities</Fit>
          <svg width="16" height="16" viewBox="0 0 48 48" className="ml-[20px]">
            <rect width="48" height="48" fill="#c40000" />
            <g fill="none" stroke="#f6dada" strokeWidth="2.500">
              <path d="M35 19v-4l-6-6H13v30l9 1M18 20h12M18 26h11M18 33h4M23 39l1-6 9-9 5 5-9 9z" />
            </g>
          </svg>
          <Fit w={298} className="ml-[6px]">org-pentaho-commons-launcher-Launcher</Fit>
          <svg width="10" height="6" viewBox="0 0 10 6" className="ml-[5px]"><path d="M0 0h10L5 6z" fill="#d0ccc4" /></svg>
        </div>
        <div className="pl-[318px]"><Fit w={67}>Tue 15:53</Fit></div>
        <div className="flex items-center justify-end pr-[15px]">
          <svg width="16" height="16" viewBox="0 0 16 16"><path d="M5.500 1h5v5h-5zM0 11h5v5H0zM10 11h5v5h-5z" fill="#d5d2ca" /><path d="M8 5v4M2.500 12V8.500h10V12" fill="none" stroke="#d5d2ca" /></svg>
          <svg width="16" height="16" viewBox="0 0 16 16" className="ml-[12px]"><path d="M0 5h3l4-4v14l-4-4H0z" fill="#d5d2ca" /><path d="M9 5.500q2 2.500 0 5M11 3.500q3.500 4.500 0 9M13 1.500q4.500 6.500 0 13" fill="none" stroke="#96938a" strokeWidth="1.400" /></svg>
          <svg width="12" height="16" viewBox="0 0 12 16" className="ml-[15px]"><path d="M3.500 0h5v2H12v14H0V2h3.500z" fill="#d5d2ca" /><path d="M2.500 4.500h7v9h-7z" fill="#47463f" /><path d="M3 6.500h6M3 9h6M3 11.500h6" stroke="#d5d2ca" strokeWidth="1.300" /></svg>
          <svg width="10" height="5" viewBox="0 0 10 5" className="ml-[12px]"><path d="M0 0h10L5 5z" fill="#d5d2ca" /></svg>
        </div>
      </div>

      <div className="flex h-[927px] shrink-0">
        <Dock />
        <div className="flex min-w-0 flex-1 flex-col">
          {/* Title bar */}
          <div className="flex h-[28px] shrink-0 items-center bg-gradient-to-b from-[#3b3a36] to-[#4b4a43] text-[#dfdbd2]">
            <div className="flex-1 pl-[835px] font-['Noto_Sans',sans-serif] text-[14px] font-semibold"><Fit w={182}>Pentaho Report Designer</Fit></div>
            <div className="flex gap-[4px] pr-[5px]">
              <svg width="16" height="16" viewBox="0 0 16 16"><circle cx="8" cy="8" r="8" fill="#7b7870" /><path d="M4 8.500h8" stroke="#3c3b37" strokeWidth="1.200" /></svg>
              <svg width="16" height="16" viewBox="0 0 16 16"><circle cx="8" cy="8" r="8" fill="#7b7870" /><path d="M4.500 5.500h7v5h-7z" fill="none" stroke="#3c3b37" strokeWidth="1.200" /></svg>
              <svg width="16" height="16" viewBox="0 0 16 16"><circle cx="8" cy="8" r="8" fill="#ee6035" /><path d="M5.500 5.500l5 5M10.500 5.500l-5 5" stroke="#4a2418" strokeWidth="1.500" /></svg>
            </div>
          </div>
          {/* Menu */}
          <div className="flex h-[23px] shrink-0 items-center bg-[#3c3b37] pb-[4px] pl-[5px] text-[#efebe2]">
            {menu.map(([t, u, w, step]) => (
              <div key={t} className="shrink-0" style={{ width: step }}>
                <Fit w={w}>
                  {t.slice(0, u)}
                  <u className="underline-offset-2">{t[u]}</u>
                  {t.slice(u + 1)}
                </Fit>
              </div>
            ))}
          </div>
          {/* Toolbar */}
          <div className="flex h-[30px] shrink-0 border-t border-b border-t-white border-b-[#d9d5d2] bg-[#f2f1f0] pl-px">
            {tools.map((t, i) => (t === "sep" ? <Sep key={i} /> : <Cell key={i}>{t}</Cell>))}
          </div>

          <div className="flex h-[820px] shrink-0">
            {/* Element palette */}
            <div className="mr-[2px] flex h-[820px] w-[30px] shrink-0 flex-col items-center border-t border-r-2 border-b border-l border-[#c6c1bc] pt-[25px] pr-[3px]">
              {palette.map((p, i) => (
                <div key={i} className="flex h-6 shrink-0 items-center"><Ic>{p}</Ic></div>
              ))}
            </div>

            {/* Editor */}
            <div className="flex w-[1154px] shrink-0 flex-col">
              <div className="flex h-[32px] shrink-0 items-end gap-px">
                <Tab className="h-[29px] w-[149px] pt-[2px] pl-[5px]">
                  <Ic><ReportDoc /></Ic>
                  <Fit w={103} className="ml-[4px]">product-listing</Fit>
                  <CloseBox />
                </Tab>
                <Tab className="h-[29px] w-[161px] pt-[2px] pl-[5px]">
                  <Ic><ReportDoc /></Ic>
                  <Fit w={117} className="ml-[3px]">sales-by-country</Fit>
                  <CloseBox />
                </Tab>
                <Tab active className="h-[31px] w-[168px] pt-[3px] pl-[5px]">
                  <Ic><ReportDoc /></Ic>
                  <Fit w={122} className="ml-[3px]">{"<Untitled Report>"}</Fit>
                  <CloseBox />
                </Tab>
              </div>
              <div className="flex h-[785px] flex-col rounded-tr border border-[#b8b4af] px-px pb-px">
                <div className="flex h-[42px] shrink-0 items-center border-t border-b-2 border-t-white border-b-[#cac6c2] pt-px">
                  <div className="flex h-[34px]">
                    {previewTools.map((t, i) => (t === "sep" ? <Sep key={i} /> : <Cell key={i}>{t}</Cell>))}
                  </div>
                  <div className="ml-[7px] flex h-[26px] w-[73px] overflow-hidden rounded-[4px] border border-[#aeaaa6] bg-white text-[#383838]">
                    <div className="flex w-[46px] items-center border-r border-[#aeaaa6] pl-[4px]"><Fit w={37}>100%</Fit></div>
                    <div className="flex flex-1 items-center justify-center bg-gradient-to-b from-white to-[#e9e7e5] pt-[3px] pl-[3px]">
                      <svg width="8" height="6" viewBox="0 0 8 6"><path d="M0 0h8L4 6z" fill="#777" /></svg>
                    </div>
                  </div>
                </div>
                <div className="flex min-h-0 flex-1">
                  <div className="flex min-w-0 flex-1"><Page /></div>
                  <VBar thumb="h-[647px]" />
                </div>
              </div>
            </div>

            {/* Side panels */}
            <div className="ml-[9px] flex w-[656px] shrink-0 flex-col">
              <div className="flex h-[32px] shrink-0 items-end">
                <Tab active className="h-[32px] w-[78px] pl-[5px]"><Fit w={67}>Structure</Fit></Tab>
                <Tab className="-ml-px h-[29px] w-[43px] pt-[2px] pl-[5px]"><Fit w={33}>Data</Fit></Tab>
              </div>
              <div className="h-[366px] shrink-0 rounded-tr border border-[#b8b4af] px-px pt-px">
                <div className="flex h-[29px] items-center pt-px">
                  <div className="flex h-[26px]">
                    <Cell><g transform="translate(.5 1)"><ListIcon /></g></Cell>
                    <Sep />
                    <Cell><g><path d="M5 8h8l2.500 5H8z" fill="#c8c8c8" stroke="#777" /><path d="M1 2.500h9l4 6H5z" fill="#9fb0ff" stroke="#3440c0" /><path d="M11.500 15.500V9" stroke="#b00010" strokeWidth="1.600" /><path d="M8.500 10.500l3-4 3 4z" fill="#b00010" /></g></Cell>
                    <Cell><g><path d="M5 8h8l2.500 5H8z" fill="#9fb0ff" stroke="#3440c0" /><path d="M1 2.500h9l4 6H5z" fill="#c8c8c8" stroke="#888" /><path d="M12 5v7" stroke="#c00010" strokeWidth="1.600" /><path d="M9 11l3 4 3-4z" fill="#c00010" /></g></Cell>
                  </div>
                </div>
                <div className="flex h-[320px]">
                  <Tree />
                  <VBar thumb="h-[244px]" />
                </div>
                <div className="flex h-[13px] w-[640px] bg-[#dbd9d7]">
                  <div className="flex w-[13px] items-center justify-center rounded-l-md border border-[#b8b4b0] bg-[#f4f3f2]"><svg width="4" height="6" viewBox="0 0 4 6"><path d="M4 0v6L0 3z" fill="#666" /></svg></div>
                  <div className="flex w-[309px] items-center justify-center gap-[2px] rounded-[6px] border border-[#a3a09c] bg-gradient-to-b from-[#fdfdfd] to-[#dedcda]">
                    <span className="h-[5px] w-px bg-[#a3a09c]" />
                    <span className="h-[5px] w-px bg-[#a3a09c]" />
                    <span className="h-[5px] w-px bg-[#a3a09c]" />
                  </div>
                  <div className="flex-1 rounded-r-md border-y border-[#c4c0bc]" />
                  <div className="flex w-[13px] items-center justify-center rounded-r-md border border-[#b8b4b0] bg-[#f4f3f2]"><svg width="4" height="6" viewBox="0 0 4 6"><path d="M0 0v6l4-3z" fill="#666" /></svg></div>
                </div>
              </div>

              <div className="mt-[9px] flex h-[32px] shrink-0 items-end">
                <Tab className="h-[30px] w-[43px] pt-[3px] pl-[3px]"><Fit w={34}>Style</Fit></Tab>
                <Tab active className="-ml-px h-[33px] w-[83px] pt-[2px] pl-[6px]"><Fit w={70}>Attributes</Fit></Tab>
              </div>
              <div className="h-[378px] shrink-0 rounded-tr border border-[#b8b4af] px-px pb-px">
                <div className="flex h-[38px] items-center gap-[7px] border-t border-white pb-px pl-[6px]">
                  <div className="flex size-[26px] items-center justify-center rounded-[4px] border border-[#a9a5a1] bg-[#e3e1df]"><Ic><ListIcon /></Ic></div>
                  <div className="flex size-[26px] items-center justify-center rounded-[4px] border border-[#b4b0ac] bg-[#f8f7f7]"><Ic><SortIc a="A" b="Z" /></Ic></div>
                  <div className="flex size-[26px] items-center justify-center rounded-[4px] border border-[#b4b0ac] bg-[#f8f7f7]"><Ic><SortIc a="Z" b="A" /></Ic></div>
                </div>
                <Attributes />
              </div>
            </div>
          </div>

          {/* Status bar */}
          <div className="flex h-[26px] shrink-0 items-center justify-end border-t border-white text-[#383838]">
            <div className="flex h-[22px] w-[161px] items-center border-l border-[#d6d3cf] pl-[7px]"><Fit w={27}>1 / 1</Fit></div>
            <div className="flex h-[22px] w-[38px] items-center border-l border-[#d6d3cf] pl-[3px]">
              <Ic><path d="M8 1.500l7 13H1z" fill="#f6cf57" stroke="#b8862a" strokeLinejoin="round" /><path d="M8 5.500v5M8 12v1.500" stroke="#333" strokeWidth="1.800" /></Ic>
            </div>
            <div className="flex h-[22px] w-[122px] items-center border-l border-[#d6d3cf] pl-[3px]">
              <div className="flex h-[18px] w-[118px] items-center overflow-hidden border border-[#8a8a8a] bg-[#dcdcdc] text-[14px] leading-[16px]">
                <div className="h-[16px] w-[56px] shrink-0 bg-black pl-[3px] text-[#7a7a7a]"><Fit w={48}>497.5 of</Fit></div>
                <Fit w={60}>1026.0 MB</Fit>
              </div>
            </div>
          </div>
        </div>
      </div>
      <div className="h-[2px] shrink-0 bg-[#56565a]" />
    </div>
  );
}
